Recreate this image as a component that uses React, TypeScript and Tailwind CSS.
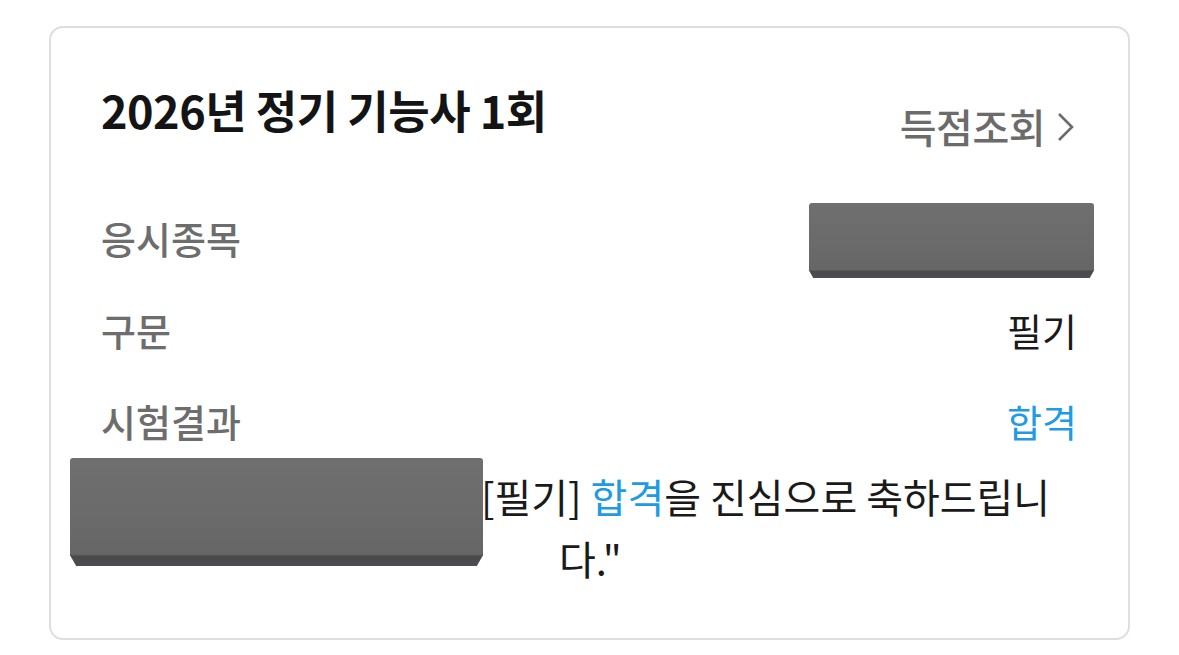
import React from "react";

const Redact = ({ className }: { className: string }) => (
  <div
    className={`absolute ${className} rounded-[3px] bg-[linear-gradient(to_bottom,#6f6f6f_0%,#6a6a6a_60%,#666666_89%,#4a4a4a_91%,#4c4c56_100%)] [clip-path:polygon(0_0,100%_0,100%_90%,98.5%_100%,1.5%_100%,0_90%)]`}
  />
);

export default function App() {
  return (
    <div className="w-[1179px] h-[655px] bg-white pt-[26px] px-[49px] font-['Noto_Sans_CJK_KR','Noto_Sans',sans-serif]">
      <div className="relative h-[614px] rounded-[14px] border-2 border-[#dedede] bg-white pl-[50px] pr-[51px] flex flex-col">
        <div className="h-[163px] flex justify-between items-start pt-[52px]">
          <div className="text-[45px] leading-[60px] font-bold text-[#141414] tracking-[-0.5px]">
            2026년 정기 기능사 1회
          </div>
          <div className="mt-[16px] flex items-center text-[40px] leading-[60px] font-medium text-[#6b6b6b] tracking-[-0.5px]">
            득점조회
            <svg width="22" height="36" viewBox="0 0 22 36" className="ml-[10px] mt-[2px]">
              <path d="M4 5 L17 18 L4 31" fill="none" stroke="#6b6b6b" strokeWidth="2.6" />
            </svg>
          </div>
        </div>
        <div className="relative h-[92px] flex items-center justify-between text-[38px] font-medium text-[#6d6d6d]">
          <span>응시종목</span>
        </div>
        <div className="h-[92px] flex items-center justify-between text-[38px]">
          <span className="font-medium text-[#6d6d6d]">구문</span>
          <span className="text-[#1a1a1a]">필기</span>
        </div>
        <div className="h-[90px] flex items-center justify-between text-[38px]">
          <span className="font-medium text-[#6d6d6d]">시험결과</span>
          <span className="text-[#1e9be2]">합격</span>
        </div>
        <div className="text-[40px] leading-[62px] text-[#1a1a1a]">
          <div className="pl-[380px]">
            [필기] <span className="text-[#1e9be2]">합격</span>을 진심으로 축하드립니
          </div>
          <div className="pl-[458px]">다."</div>
        </div>
        <Redact className="left-[758px] top-[175px] w-[285px] h-[75px]" />
        <Redact className="left-[19px] top-[430px] w-[413px] h-[108px]" />
      </div>
    </div>
  );
}
